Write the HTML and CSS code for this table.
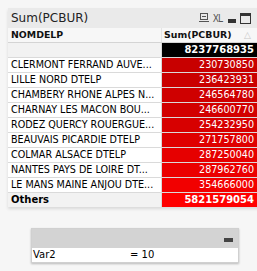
FILE: index.html
```html
<!DOCTYPE html>
<html>
<head>
<meta charset="utf-8">
<link rel="stylesheet" href="styles.css">
</head>
<body>
<div class="page">
  <div class="tbox">
    <div class="caption">
      <span class="cap-title">Sum(PCBUR)</span>
      <span class="cap-icons">
        <svg class="ic" width="10" height="10" viewBox="0 0 10 10"><rect x="1.5" y="0.5" width="7" height="6" fill="none" stroke="#555"/><line x1="3" y1="3.5" x2="7" y2="3.5" stroke="#555"/><line x1="0" y1="8.5" x2="10" y2="8.5" stroke="#555"/></svg>
        <span class="xl">XL</span>
        <svg class="ic" width="8" height="10" viewBox="0 0 8 10"><rect x="0" y="6" width="8" height="4" fill="#333"/></svg>
        <svg class="ic" width="11" height="11" viewBox="0 0 11 11"><rect x="0.5" y="0.5" width="10" height="10" fill="none" stroke="#333"/><rect x="0" y="0" width="11" height="3" fill="#333"/></svg>
      </span>
    </div>
    <div class="row head">
      <div class="c1">NOMDELP</div>
      <div class="c2 hc2"><span>Sum(PCBUR)</span><span class="sort">△</span></div>
    </div>
    <div class="row total">
      <div class="c1"></div>
      <div class="c2 num blk">8237768935</div>
    </div>
    <div class="row"><div class="c1">CLERMONT FERRAND AUVE...</div><div class="c2 num" style="background:#c80000">230730850</div></div>
    <div class="row"><div class="c1">LILLE NORD DTELP</div><div class="c2 num" style="background:#ca0000">236423931</div></div>
    <div class="row"><div class="c1">CHAMBERY RHONE ALPES N...</div><div class="c2 num" style="background:#cf0000">246564780</div></div>
    <div class="row"><div class="c1">CHARNAY LES MACON BOU...</div><div class="c2 num" style="background:#d20000">246600770</div></div>
    <div class="row"><div class="c1">RODEZ QUERCY ROUERGUE...</div><div class="c2 num" style="background:#d70000">254232950</div></div>
    <div class="row"><div class="c1">BEAUVAIS PICARDIE DTELP</div><div class="c2 num" style="background:#df0000">271757800</div></div>
    <div class="row"><div class="c1">COLMAR ALSACE DTELP</div><div class="c2 num" style="background:#e60000">287250040</div></div>
    <div class="row"><div class="c1">NANTES PAYS DE LOIRE DT...</div><div class="c2 num" style="background:#eb0000">287962760</div></div>
    <div class="row"><div class="c1">LE MANS MAINE ANJOU DTE...</div><div class="c2 num" style="background:#f20000">354666000</div></div>
    <div class="row others"><div class="c1">Others</div><div class="c2 num" style="background:#ff0000">5821579054</div></div>
  </div>

  <div class="vbox">
    <div class="vcap">
      <svg width="9" height="4" viewBox="0 0 9 4"><rect width="9" height="4" fill="#444"/></svg>
    </div>
    <div class="vrow">
      <span class="vname">Var2</span>
      <span class="vval">= 10</span>
    </div>
  </div>
</div>
</body>
</html>
```

FILE: styles.css
```css
html, body {
  margin: 0;
  padding: 0;
  background: #f6f6f6;
  overflow: hidden;
}
body {
  width: 257px;
  height: 271px;
  font-family: "DejaVu Sans", Verdana, sans-serif;
  font-size: 10px;
  color: #000;
}
.page {
  padding: 8px 0 0 8px;
  display: flex;
  flex-direction: column;
}
.tbox {
  width: 260px;
  background: #fff;
  box-shadow: 0 2px 3px rgba(0,0,0,0.12);
  display: flex;
  flex-direction: column;
}
.caption {
  height: 20px;
  background: #eaeaea;
  display: flex;
  align-items: center;
  justify-content: space-between;
  padding-left: 3px;
  padding-right: 17px;
}
.cap-title {
  font-size: 12px;
  color: #222;
  line-height: 20px;
}
.cap-icons {
  display: flex;
  align-items: center;
  gap: 4px;
}
.ic { display: block; }
.xl {
  font-family: "DejaVu Sans Condensed", "DejaVu Sans", sans-serif;
  font-size: 10px;
  color: #555;
  letter-spacing: -1px;
  margin-right: 2px;
}
.row {
  display: flex;
  height: 14px;
  border-bottom: 1px solid #dadada;
  line-height: 14px;
}
.row.head {
  border-bottom-color: #d4d4d4;
  background: #f7f7f7;
}
.c1 {
  width: 150px;
  padding-left: 3px;
  border-right: 1px solid #d8d8d8;
  white-space: nowrap;
  overflow: hidden;
  font-size: 9.6px;
}
.c2 {
  width: 92px;
  padding-right: 3px;
  color: #fff;
}
.num {
  text-align: right;
  font-size: 9.6px;
}
.head .c1, .head .c2 {
  font-weight: bold;
  font-size: 9.4px;
  color: #111;
}
.head .c1 { background: #f7f7f7; border-right-color: #e4e4e4; }
.hc2 {
  display: flex;
  justify-content: space-between;
  padding-left: 2px;
  padding-right: 6px;
  width: 87px;
}
.sort {
  color: #c8c8c8;
  font-weight: normal;
  font-size: 9px;
}
.total .c1 { background: #f2f2f2; }
.blk {
  background: #000;
  font-weight: bold;
  font-size: 10px;
}
.others {
  border-bottom: none;
}
.others .c1 {
  background: #f2f2f2;
  font-weight: bold;
  font-size: 10px;
}
.others .c2 {
  font-weight: bold;
  font-size: 10px;
}
.vbox {
  margin-top: 21px;
  margin-left: 23px;
  width: 206px;
  background: #fff;
  box-shadow: 0 1px 2px rgba(0,0,0,0.25);
  border: 1px solid #d0d0d0;
  display: flex;
  flex-direction: column;
}
.vcap {
  height: 19px;
  background: #d3d3d3;
  display: flex;
  justify-content: flex-end;
  align-items: center;
  padding-right: 5px;
  padding-top: 2px;
  box-sizing: border-box;
}
.vrow {
  height: 14px;
  line-height: 14px;
  display: flex;
  padding-left: 1px;
  font-size: 10px;
}
.vname { width: 97px; }
.vval { }
```
